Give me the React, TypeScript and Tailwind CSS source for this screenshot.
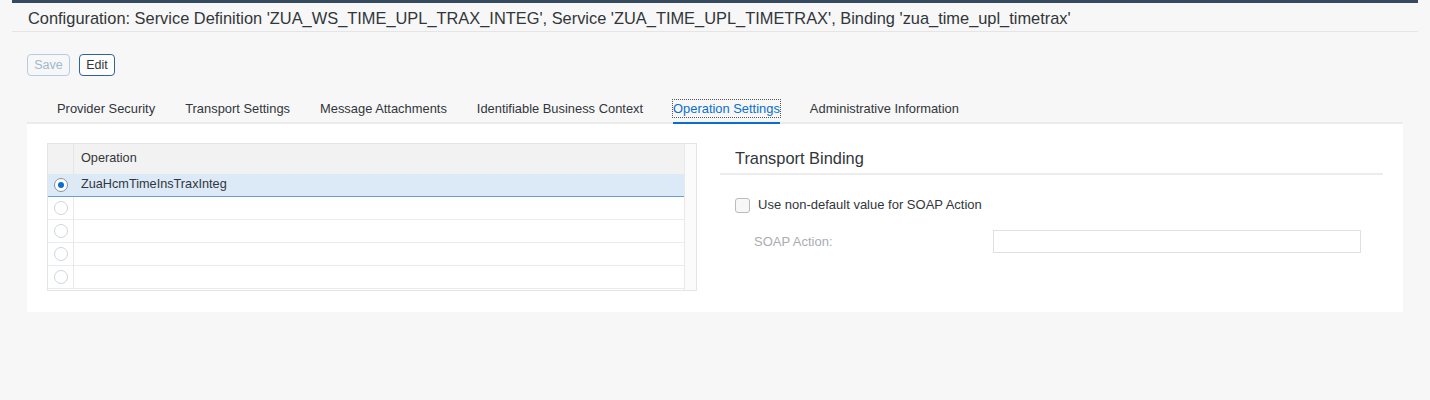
import React from "react";

function Radio({ checked }: { checked?: boolean }) {
  return checked ? (
    <span className="w-[14px] h-[14px] rounded-full border border-[#89919a] bg-white flex items-center justify-center">
      <span className="w-[6px] h-[6px] rounded-full bg-[#0a6ed1]" />
    </span>
  ) : (
    <span className="w-[14px] h-[14px] rounded-full border border-[#ccd6de] bg-white" />
  );
}

export default function App() {
  const tabs = [
    "Provider Security",
    "Transport Settings",
    "Message Attachments",
    "Identifiable Business Context",
    "Operation Settings",
    "Administrative Information",
  ];
  const rows = ["ZuaHcmTimeInsTraxInteg", "", "", "", ""];
  return (
    <div className="w-full min-h-[400px] bg-[#f7f7f7] text-[#32363a] font-['Liberation_Sans',Arial,sans-serif]">
      <div className="mx-[12px]">
        <div className="h-[3px] bg-[#354a5f]" />
        <div className="h-[29px] flex items-center pl-[16px] pt-[2px] text-[16.4px] border-b border-[#e5e5e5]">
          Configuration: Service Definition 'ZUA_WS_TIME_UPL_TRAX_INTEG', Service 'ZUA_TIME_UPL_TIMETRAX', Binding 'zua_time_upl_timetrax'
        </div>
      </div>
      <div className="px-[27px]">
        <div className="mt-[22px] flex gap-[9px]">
          <button className="h-[22px] w-[43px] rounded-[4px] border border-[#b3cde6] text-[12.5px] text-[#9fb8d2] bg-transparent">
            Save
          </button>
          <button className="h-[22px] w-[36px] rounded-[4px] border border-[#2f639a] text-[12.5px] text-[#32363a] bg-white">
            Edit
          </button>
        </div>
        <div className="mt-[19px] h-[29px] flex pl-[15px] border-b-2 border-[#ebebeb] text-[12.9px]">
          {tabs.map((t) => {
            const active = t === "Operation Settings";
            return (
              <div key={t} className="relative mx-[15px] flex items-center h-full">
                {active ? (
                  <>
                    <span className="leading-[17px] text-[#0a6ed1] outline outline-1 outline-dotted outline-[#555]">
                      {t}
                    </span>
                    <span className="absolute left-0 right-0 bottom-[-2px] h-[2px] bg-[#0a6ed1]" />
                  </>
                ) : (
                  <span className="leading-[17px]">{t}</span>
                )}
              </div>
            );
          })}
        </div>
        <div className="h-[188px] bg-white pl-[20px] pr-[20px] pt-[19px] flex gap-[23px]">
          <div className="w-[650px] h-[148px] border border-[#e5e5e5] flex text-[12.7px]">
            <div className="flex-1 flex flex-col">
              <div className="h-[30px] bg-[#f2f2f2] flex">
                <div className="w-[26px] border-r border-[#e5e5e5]" />
                <div className="pl-[7px] flex items-center">Operation</div>
              </div>
              {rows.map((r, i) => (
                <div
                  key={i}
                  className={
                    i === 0
                      ? "h-[23px] flex bg-[#dceaf7] border-b border-[#6a9fcf]"
                      : "h-[23px] flex border-b border-[#ececec]"
                  }
                >
                  <div className="w-[26px] border-r border-[#e8e8e8] flex items-center justify-center">
                    <Radio checked={i === 0} />
                  </div>
                  <div className="pl-[7px] flex items-center">{r}</div>
                </div>
              ))}
            </div>
            <div className="w-[12px] border-l border-[#e8e8e8] bg-[#fbfbfb]" />
          </div>
          <div className="flex-1">
            <div className="h-[32px] border-b-2 border-[#ececec] pl-[15px] flex items-center text-[16.4px]">
              Transport Binding
            </div>
            <div className="mt-[22px] pl-[15px] flex items-center h-[16px] text-[13px]">
              <span className="w-[15px] h-[15px] rounded-[3px] border border-[#b8bcc0] bg-[#f7f7f7]" />
              <span className="ml-[8px]">Use non-default value for SOAP Action</span>
            </div>
            <div className="mt-[17px] flex items-center h-[23px] text-[13px]">
              <span className="pl-[34px] w-[273px] text-[#a9adb2]">SOAP Action:</span>
              <span className="w-[368px] h-[23px] border border-[#e0e0e0] bg-white" />
            </div>
          </div>
        </div>
      </div>
    </div>
  );
}
